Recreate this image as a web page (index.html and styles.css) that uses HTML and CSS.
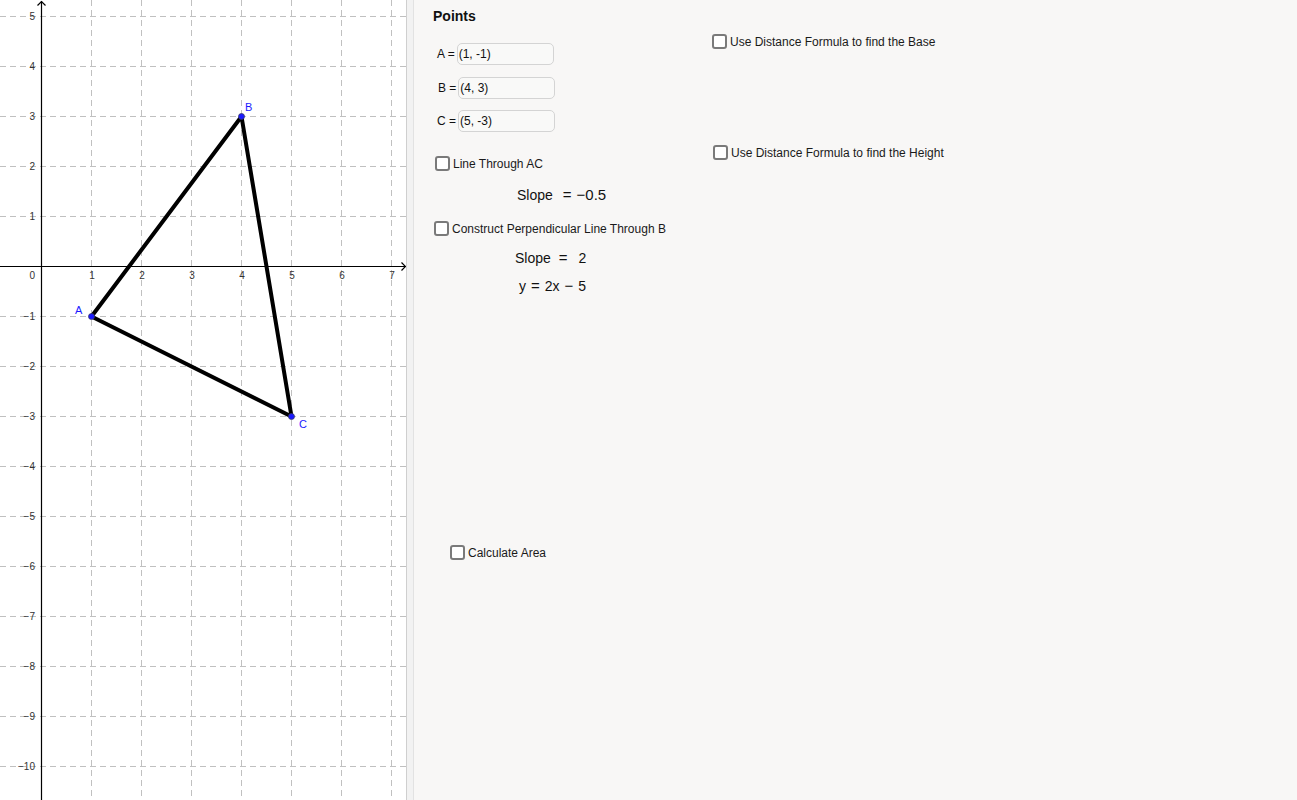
FILE: index.html
```html
<!DOCTYPE html>
<html>
<head>
<meta charset="utf-8">
<link rel="stylesheet" href="styles.css">
</head>
<body>
<div class="app">
  <div class="graph">
    <svg width="406" height="800" viewBox="0 0 406 800" xmlns="http://www.w3.org/2000/svg">
      <rect x="0" y="0" width="406" height="800" fill="#ffffff"/>
      <g class="grid" stroke="#c0c0c0" stroke-width="1" stroke-dasharray="6 4" fill="none">
        <line x1="91.5" y1="0" x2="91.5" y2="800"/>
        <line x1="141.5" y1="0" x2="141.5" y2="800"/>
        <line x1="191.5" y1="0" x2="191.5" y2="800"/>
        <line x1="241.5" y1="0" x2="241.5" y2="800"/>
        <line x1="291.5" y1="0" x2="291.5" y2="800"/>
        <line x1="341.5" y1="0" x2="341.5" y2="800"/>
        <line x1="391.5" y1="0" x2="391.5" y2="800"/>
        <line x1="0" y1="16.5" x2="406" y2="16.5"/>
        <line x1="0" y1="66.5" x2="406" y2="66.5"/>
        <line x1="0" y1="116.5" x2="406" y2="116.5"/>
        <line x1="0" y1="166.5" x2="406" y2="166.5"/>
        <line x1="0" y1="216.5" x2="406" y2="216.5"/>
        <line x1="0" y1="316.5" x2="406" y2="316.5"/>
        <line x1="0" y1="366.5" x2="406" y2="366.5"/>
        <line x1="0" y1="416.5" x2="406" y2="416.5"/>
        <line x1="0" y1="466.5" x2="406" y2="466.5"/>
        <line x1="0" y1="516.5" x2="406" y2="516.5"/>
        <line x1="0" y1="566.5" x2="406" y2="566.5"/>
        <line x1="0" y1="616.5" x2="406" y2="616.5"/>
        <line x1="0" y1="666.5" x2="406" y2="666.5"/>
        <line x1="0" y1="716.5" x2="406" y2="716.5"/>
        <line x1="0" y1="766.5" x2="406" y2="766.5"/>
      </g>
      <g class="axes" stroke="#000" stroke-width="1.2" fill="none">
        <line x1="41.5" y1="800" x2="41.5" y2="1"/>
        <polyline points="37.5,5.5 41.5,1.5 45.5,5.5"/>
        <line x1="0" y1="266.5" x2="406" y2="266.5"/>
        <polyline points="401.5,262.5 405.5,266.5 401.5,270.5"/>
      </g>
      <g class="ticks" font-family="Liberation Sans, Arial, sans-serif" font-size="10" fill="#333">
        <text x="92" y="279" text-anchor="middle">1</text>
        <text x="142" y="279" text-anchor="middle">2</text>
        <text x="192" y="279" text-anchor="middle">3</text>
        <text x="242" y="279" text-anchor="middle">4</text>
        <text x="292" y="279" text-anchor="middle">5</text>
        <text x="342" y="279" text-anchor="middle">6</text>
        <text x="392" y="279" text-anchor="middle">7</text>
        <text x="35" y="279" text-anchor="end">0</text>
        <text x="35" y="20" text-anchor="end">5</text>
        <text x="35" y="70" text-anchor="end">4</text>
        <text x="35" y="120" text-anchor="end">3</text>
        <text x="35" y="170" text-anchor="end">2</text>
        <text x="35" y="220" text-anchor="end">1</text>
        <text x="35" y="320" text-anchor="end">−1</text>
        <text x="35" y="370" text-anchor="end">−2</text>
        <text x="35" y="420" text-anchor="end">−3</text>
        <text x="35" y="470" text-anchor="end">−4</text>
        <text x="35" y="520" text-anchor="end">−5</text>
        <text x="35" y="570" text-anchor="end">−6</text>
        <text x="35" y="620" text-anchor="end">−7</text>
        <text x="35" y="670" text-anchor="end">−8</text>
        <text x="35" y="720" text-anchor="end">−9</text>
        <text x="35" y="770" text-anchor="end">−10</text>
      </g>
      <polygon points="91.5,316.5 241.5,116.5 291.5,416.5" fill="none" stroke="#000" stroke-width="4" stroke-linejoin="round"/>
      <g fill="#1a1aff" stroke="#3a3a6a" stroke-width="0.8">
        <circle cx="91.5" cy="316.5" r="3"/>
        <circle cx="241.5" cy="116.5" r="3"/>
        <circle cx="291.5" cy="416.5" r="3"/>
      </g>
      <g font-family="Liberation Sans, Arial, sans-serif" font-size="11" fill="#1a1aff">
        <text x="75" y="314">A</text>
        <text x="245" y="111">B</text>
        <text x="299" y="428">C</text>
      </g>
    </svg>
  </div>
  <div class="divider"></div>
  <div class="panel">
    <div class="title">Points</div>

    <div class="field field-a"><span class="flabel">A =</span><span class="fbox">(1, -1)</span></div>
    <div class="field field-b"><span class="flabel">B =</span><span class="fbox">(4, 3)</span></div>
    <div class="field field-c"><span class="flabel">C =</span><span class="fbox">(5, -3)</span></div>

    <label class="check check-base"><span class="box"></span><span>Use Distance Formula to find the Base</span></label>
    <label class="check check-height"><span class="box"></span><span>Use Distance Formula to find the Height</span></label>
    <label class="check check-ac"><span class="box"></span><span>Line Through AC</span></label>
    <label class="check check-perp"><span class="box"></span><span>Construct Perpendicular Line Through B</span></label>
    <label class="check check-area"><span class="box"></span><span>Calculate Area</span></label>

    <div class="math math-slope1"><span>Slope</span><span class="op">=</span><span class="val">−0.5</span></div>
    <div class="math math-slope2"><span>Slope</span><span class="op op-b">=</span><span>2</span></div>
    <div class="math math-eq"><span>y</span><span class="op2">=</span><span>2x</span><span class="op2">−</span><span>5</span></div>
  </div>
</div>
</body>
</html>
```
FILE: styles.css
```css
html, body {
  margin: 0;
  padding: 0;
  background: #ffffff;
}

.app {
  display: flex;
  width: 1297px;
  height: 800px;
  overflow: hidden;
  font-family: "Liberation Sans", Arial, sans-serif;
}

.graph {
  width: 406px;
  height: 800px;
  flex: none;
}

.graph svg {
  display: block;
}

.divider {
  width: 6px;
  flex: none;
  background: #f2f2f2;
  border-left: 1px solid #cfcfcf;
  border-right: 1px solid #e2e2e2;
}

.panel {
  flex: 1;
  position: relative;
  background: #f8f7f6;
  color: #1a1a1a;
}

.title {
  position: absolute;
  left: 19px;
  top: 8px;
  font-size: 14px;
  font-weight: bold;
  color: #111;
}

.field {
  position: absolute;
  display: flex;
  align-items: center;
  gap: 2px;
  font-size: 12px;
  color: #111;
}

.field-a { left: 23px; top: 43px; }
.field-b { left: 24px; top: 77px; }
.field-c { left: 23px; top: 110px; }

.fbox {
  box-sizing: border-box;
  width: 97px;
  height: 22px;
  border: 1px solid #d4d4d4;
  border-radius: 5px;
  background: #f9f9f8;
  padding-left: 1px;
  display: flex;
  align-items: center;
}

.check {
  position: absolute;
  display: flex;
  align-items: center;
  gap: 3px;
  font-size: 12px;
  color: #1a1a1a;
  white-space: nowrap;
}

.box {
  box-sizing: border-box;
  width: 15px;
  height: 15px;
  border: 2px solid #7a7a7a;
  border-radius: 3px;
  background: #ffffff;
  flex: none;
}

.check-base { left: 298px; top: 34px; }
.check-height { left: 299px; top: 145px; }
.check-ac { left: 21px; top: 156px; }
.check-perp { left: 20px; top: 221px; }
.check-area { left: 36px; top: 545px; }

.math {
  position: absolute;
  display: flex;
  align-items: baseline;
  font-size: 14px;
  color: #111;
  white-space: nowrap;
}

.math .op {
  font-size: 15px;
  margin: 0 5px 0 10px;
}

.math .val {
  font-size: 15px;
}

.math .op-b {
  margin: 0 11px 0 8px;
}

.math .op2 {
  font-size: 15px;
  margin: 0 5px;
}

.math-slope1 { left: 103px; top: 186px; }
.math-slope2 { left: 101px; top: 249px; }
.math-eq { left: 105px; top: 277px; }
```
